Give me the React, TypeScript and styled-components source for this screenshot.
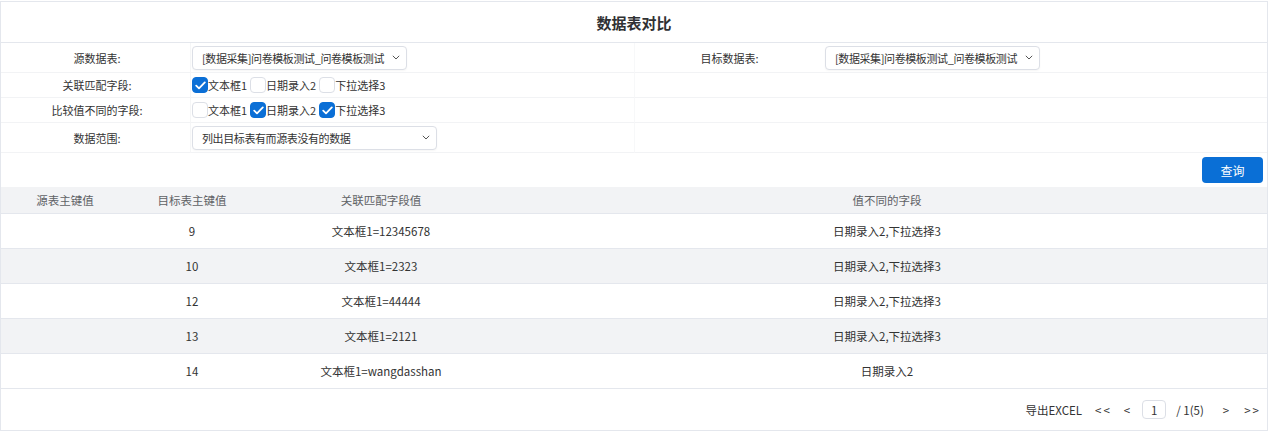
import React from 'react';
import styled, { createGlobalStyle } from 'styled-components';

const GlobalStyle = createGlobalStyle`
  body {
    margin: 0;
    background: #ffffff;
    font-family: "Noto Sans CJK SC", "Noto Sans", sans-serif;
    font-size: 11.5px;
    color: #333333;
  }
`;

const Page = styled.div`
  margin: 1px 1px 0 0;
  height: 430px;
  box-sizing: border-box;
  border: 1px solid #e4e7ed;
  display: flex;
  flex-direction: column;
`;

const TitleBar = styled.div`
  height: 40px;
  display: flex;
  align-items: center;
  justify-content: center;
  border-bottom: 1px solid #e4e7ed;
  font-size: 15px;
  font-weight: bold;
  color: #303133;
`;

const FormGrid = styled.div`
  display: grid;
  grid-template-columns: 190px 443px 190px 1fr;
  grid-template-rows: 30px 25px 25px 30px;
  font-size: 11px;
`;

const LabelCell = styled.div<{ $first?: boolean }>`
  display: flex;
  align-items: center;
  justify-content: center;
  padding-left: ${p => (p.$first ? '3px' : '0')};
  border-bottom: 1px solid #f2f3f5;
  border-right: ${p => (p.$first ? '1px solid #f5f6f7' : 'none')};
  border-left: ${p => (p.$first ? 'none' : '1px solid #f7f8f9')};
  color: #333333;
`;

const ValueCell = styled.div`
  display: flex;
  align-items: center;
  padding-left: 1px;
  border-bottom: 1px solid #f2f3f5;
`;

const SelectBox = styled.div<{ $width: number }>`
  width: ${p => p.$width}px;
  height: 24px;
  box-sizing: border-box;
  border: 1px solid #dcdfe6;
  border-radius: 4px;
  display: flex;
  align-items: center;
  justify-content: space-between;
  gap: 4px;
  padding: 0 6px 0 9px;
  color: #333333;
  background: #ffffff;
  white-space: nowrap;
  overflow: hidden;
  box-shadow: 0 1px 2px rgba(0, 0, 0, 0.04);
`;

const SelectText = styled.span`
  flex: 1;
  overflow: hidden;
  letter-spacing: -0.4px;
`;

const Chevron = () => (
  <svg width="8" height="5" viewBox="0 0 8 5" style={{ flexShrink: 0 }}>
    <path d="M0.8 0.8 L4 4 L7.2 0.8" fill="none" stroke="#555" strokeWidth="1" />
  </svg>
);

const CheckGroup = styled.div`
  display: flex;
  align-items: center;
  gap: 3px;
`;

const CheckItem = styled.label`
  display: flex;
  align-items: center;
`;

const Box = styled.span<{ $checked: boolean }>`
  width: 16px;
  height: 16px;
  box-sizing: border-box;
  border-radius: 4px;
  display: inline-flex;
  align-items: center;
  justify-content: center;
  background: ${p => (p.$checked ? '#0b6fd6' : '#ffffff')};
  border: 1px solid ${p => (p.$checked ? '#0b6fd6' : '#dcdfe6')};
`;

const Toolbar = styled.div`
  height: 34px;
  display: flex;
  align-items: center;
  justify-content: flex-end;
  padding-right: 4px;
`;

const QueryButton = styled.button`
  width: 61px;
  height: 26px;
  border: none;
  border-radius: 4px;
  background: #0a6fd6;
  color: #ffffff;
  font-family: inherit;
  font-size: 12px;
`;

const Table = styled.div`
  display: grid;
  grid-template-columns: 128px 126px 252px 1fr;
`;

const HeadCell = styled.div`
  height: 26px;
  display: flex;
  align-items: center;
  justify-content: center;
  background: #f2f3f5;
  border-bottom: 1px solid #e4e7ed;
  color: #606266;
`;

const BodyCell = styled.div<{ $striped: boolean }>`
  height: 35px;
  box-sizing: border-box;
  display: flex;
  align-items: center;
  justify-content: center;
  background: ${p => (p.$striped ? '#f2f3f5' : '#ffffff')};
  border-bottom: 1px solid #e4e7ed;
  color: #333333;
`;

const Footer = styled.div`
  flex: 1;
  display: flex;
  align-items: center;
  justify-content: flex-end;
  padding-right: 8px;
  color: #333333;
`;

const PagerLink = styled.span<{ $gap: number; $spaced?: boolean }>`
  margin-left: ${p => p.$gap}px;
  letter-spacing: ${p => (p.$spaced ? '2px' : '0')};
  margin-right: ${p => (p.$spaced ? '-2px' : '0')};
`;

const PageInput = styled.span`
  margin-left: 12px;
  width: 24px;
  height: 19px;
  box-sizing: border-box;
  border: 1px solid #dcdfe6;
  border-radius: 4px;
  display: inline-flex;
  align-items: center;
  justify-content: center;
`;

const fields = ['文本框1', '日期录入2', '下拉选择3'];

const CheckRow: React.FC<{ checked: boolean[] }> = ({ checked }) => (
  <CheckGroup>
    {fields.map((f, i) => (
      <CheckItem key={f}>
        <Box $checked={checked[i]}>
          {checked[i] && (
            <svg width="11" height="9" viewBox="0 0 11 9">
              <path d="M1.2 4.6 L4 7.3 L9.8 1.4" fill="none" stroke="#fff" strokeWidth="1.8" strokeLinecap="round" strokeLinejoin="round" />
            </svg>
          )}
        </Box>
        {f}
      </CheckItem>
    ))}
  </CheckGroup>
);

const rows = [
  { key: '9', match: '文本框1=12345678', diff: '日期录入2,下拉选择3' },
  { key: '10', match: '文本框1=2323', diff: '日期录入2,下拉选择3' },
  { key: '12', match: '文本框1=44444', diff: '日期录入2,下拉选择3' },
  { key: '13', match: '文本框1=2121', diff: '日期录入2,下拉选择3' },
  { key: '14', match: '文本框1=wangdasshan', diff: '日期录入2' },
];

const App: React.FC = () => (
  <React.Fragment>
    <GlobalStyle />
    <Page>
      <TitleBar>数据表对比</TitleBar>
      <FormGrid>
        <LabelCell $first>源数据表:</LabelCell>
        <ValueCell>
          <SelectBox $width={215}>
            <SelectText>[数据采集]问卷模板测试_问卷模板测试</SelectText>
            <Chevron />
          </SelectBox>
        </ValueCell>
        <LabelCell>目标数据表:</LabelCell>
        <ValueCell>
          <SelectBox $width={215}>
            <SelectText>[数据采集]问卷模板测试_问卷模板测试</SelectText>
            <Chevron />
          </SelectBox>
        </ValueCell>

        <LabelCell $first>关联匹配字段:</LabelCell>
        <ValueCell>
          <CheckRow checked={[true, false, false]} />
        </ValueCell>
        <LabelCell />
        <ValueCell />

        <LabelCell $first>比较值不同的字段:</LabelCell>
        <ValueCell>
          <CheckRow checked={[false, true, true]} />
        </ValueCell>
        <LabelCell />
        <ValueCell />

        <LabelCell $first>数据范围:</LabelCell>
        <ValueCell>
          <SelectBox $width={245}>
            <SelectText>列出目标表有而源表没有的数据</SelectText>
            <Chevron />
          </SelectBox>
        </ValueCell>
        <LabelCell />
        <ValueCell />
      </FormGrid>
      <Toolbar>
        <QueryButton>查询</QueryButton>
      </Toolbar>
      <Table>
        <HeadCell>源表主键值</HeadCell>
        <HeadCell>目标表主键值</HeadCell>
        <HeadCell>关联匹配字段值</HeadCell>
        <HeadCell>值不同的字段</HeadCell>
        {rows.map((r, i) => (
          <React.Fragment key={r.key}>
            <BodyCell $striped={i % 2 === 1} />
            <BodyCell $striped={i % 2 === 1}>{r.key}</BodyCell>
            <BodyCell $striped={i % 2 === 1}>{r.match}</BodyCell>
            <BodyCell $striped={i % 2 === 1}>{r.diff}</BodyCell>
          </React.Fragment>
        ))}
      </Table>
      <Footer>
        <span>导出EXCEL</span>
        <PagerLink $gap={13} $spaced>&lt;&lt;</PagerLink>
        <PagerLink $gap={14}>&lt;</PagerLink>
        <PageInput>1</PageInput>
        <PagerLink $gap={10}>/ 1(5)</PagerLink>
        <PagerLink $gap={19}>&gt;</PagerLink>
        <PagerLink $gap={15} $spaced>&gt;&gt;</PagerLink>
      </Footer>
    </Page>
  </React.Fragment>
);

export default App;
